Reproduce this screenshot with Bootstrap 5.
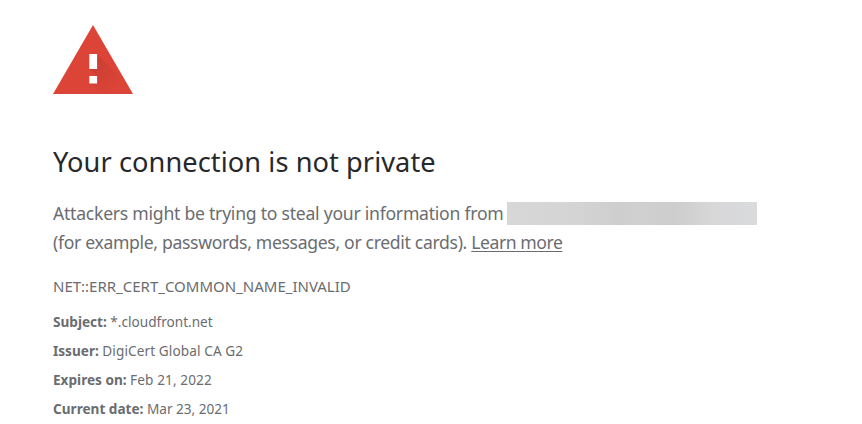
<!DOCTYPE html>
<html lang="en">
<head>
<meta charset="utf-8">
<meta name="viewport" content="width=device-width, initial-scale=1">
<title>Privacy error</title>
<link href="https://cdn.jsdelivr.net/npm/bootstrap@5.3.0/dist/css/bootstrap.min.css" rel="stylesheet">
<style>
  body { font-family: "Segoe UI", "Noto Sans", "Open Sans", sans-serif; color: #6a6c70; background: #fff; overflow: hidden; }
  .interstitial { padding: 25px 0 0 53px; }
  .warning-icon { width: 80px; height: 69px; margin-bottom: 50px; }
  .headline { font-size: 27.2px; line-height: 36px; color: #27282c; font-weight: 400; margin-bottom: 19px; letter-spacing: .07px; }
  .explain { font-size: 17.6px; line-height: 29px; margin-bottom: 19px; letter-spacing: -.25px; }
  .explain .detail { letter-spacing: -.33px; }
  .explain a { color: inherit; text-underline-offset: 2px; text-decoration-thickness: 1px; letter-spacing: -.45px; }
  .hidden-host { width: 250px; height: 23px; margin-left: 3px; background: linear-gradient(90deg, #d7d7d7, #d4d4d5 28%, #cecece 45%, #d0d0d0 52%, #cdcdcd 67%, #d7d7d8 82%, #dadbdd); }
  .error-code { font-size: 15px; line-height: 20px; margin-bottom: 11px; }
  .cert { font-size: 13.6px; line-height: 29px; }
  .cert .wide { letter-spacing: .1px; }
</style>
</head>
<body>
<main class="interstitial text-nowrap">
  <svg class="warning-icon d-block" viewBox="0 0 80 69" role="img" aria-label="Warning">
    <defs><linearGradient id="shade" x1="40" y1="35" x2="62" y2="62" gradientUnits="userSpaceOnUse"><stop stop-color="#c93e33"/><stop offset="1" stop-color="#db4437"/></linearGradient></defs>
    <path d="M40 0 80 69H0Z" fill="#db4437"/>
    <path d="M44 29 64 49 75 69H52L36 58.500H44V51L36 44H44Z" fill="url(#shade)"/>
    <path d="M36.300 29h7.800v15h-7.800zM36.300 51h7.800v7.500h-7.800z" fill="#fff"/>
  </svg>
  <h1 class="headline">Your connection is not private</h1>
  <div class="explain">
    <div class="d-flex align-items-center"><span>Attackers might be trying to steal your information from</span><span class="hidden-host"></span></div>
    <div class="detail">(for example, passwords, messages, or credit cards). <a href="#">Learn more</a></div>
  </div>
  <div class="error-code">NET::ERR_CERT_COMMON_NAME_INVALID</div>
  <div class="cert">
    <div><strong>Subject:</strong> *.cloudfront.net</div>
    <div><strong>Issuer:</strong> <span class="wide">DigiCert Global CA G2</span></div>
    <div><strong>Expires on:</strong> <span class="wide">Feb 21, 2022</span></div>
    <div><strong>Current date:</strong> Mar 23, 2021</div>
  </div>
</main>
<script src="https://cdn.jsdelivr.net/npm/bootstrap@5.3.0/dist/js/bootstrap.bundle.min.js"></script>
</body>
</html>
